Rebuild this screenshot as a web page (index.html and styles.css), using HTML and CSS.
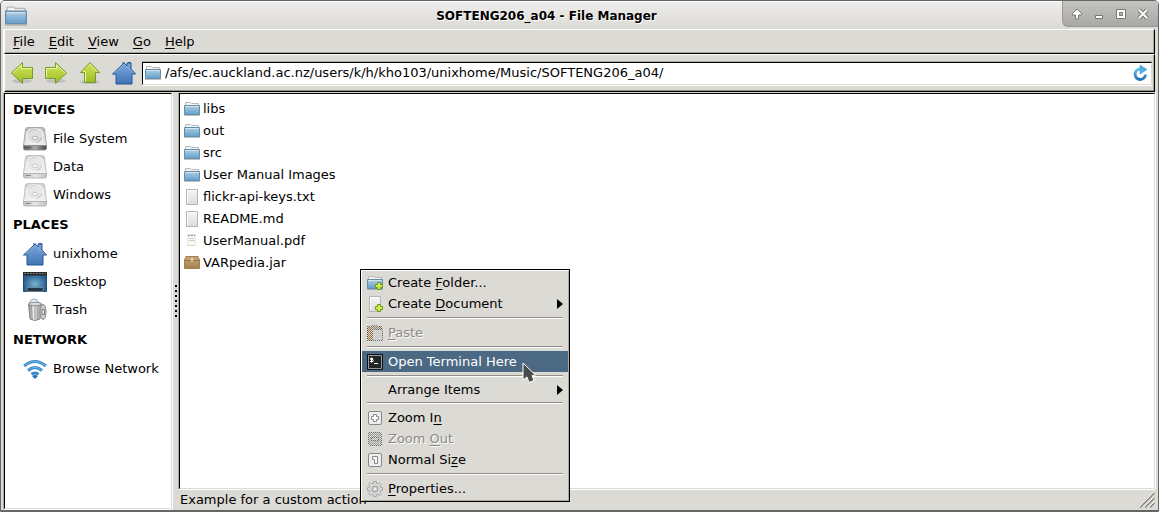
FILE: index.html
```html
<!DOCTYPE html>
<html lang="en">
<head>
<meta charset="utf-8">
<title>SOFTENG206_a04 - File Manager</title>
<link rel="stylesheet" href="styles.css">
</head>
<body>
<svg class="defs" aria-hidden="true">
  <defs>
    <linearGradient id="blue" x2="0" y2="1"><stop offset="0" stop-color="#b3cfe3"/><stop offset="1" stop-color="#5f9fce"/></linearGradient>
    <linearGradient id="green" x2="0" y2="1"><stop offset="0" stop-color="#d6e85c"/><stop offset="1" stop-color="#9cbb25"/></linearGradient>
    <linearGradient id="house" x2="0" y2="1"><stop offset="0" stop-color="#7fa8da"/><stop offset="1" stop-color="#3f74b7"/></linearGradient>
    <linearGradient id="paper" x2="0" y2="1"><stop offset="0" stop-color="#f6f6f6"/><stop offset="1" stop-color="#dcdcdc"/></linearGradient>
    <linearGradient id="metal" x2="0" y2="1"><stop offset="0" stop-color="#bcbcbc"/><stop offset="1" stop-color="#f1f1f1"/></linearGradient>
    <linearGradient id="edge"><stop offset="0" stop-color="#555"/><stop offset=".5" stop-color="#aaa"/><stop offset="1" stop-color="#444"/></linearGradient>
    <linearGradient id="edge-light"><stop offset="0" stop-color="#aaa"/><stop offset=".5" stop-color="#ddd"/><stop offset="1" stop-color="#aaa"/></linearGradient>
    <linearGradient id="box" x2="0" y2="1"><stop offset="0" stop-color="#c9a677"/><stop offset="1" stop-color="#a48150"/></linearGradient>
    <radialGradient id="screen" cy=".6"><stop offset="0" stop-color="#78b3cc"/><stop offset="1" stop-color="#2c5f93"/></radialGradient>
    <linearGradient id="wave" x2="0" y2="1"><stop offset="0" stop-color="#65c4ea"/><stop offset="1" stop-color="#2470bd"/></linearGradient>
    <linearGradient id="can"><stop offset="0" stop-color="#888"/><stop offset=".4" stop-color="#eee"/><stop offset="1" stop-color="#999"/></linearGradient>
    <pattern id="dither" width="2" height="2" patternUnits="userSpaceOnUse"><path d="M0 0h1v1H0zM1 1h1v1H1z" fill="#dcdad5"/></pattern>
  </defs>
  <symbol id="folder" viewBox="0 0 16 16">
    <path d="M1.500 5V1.500h5l1 1h7V5" fill="#f4f4f4" stroke="#b8b8b8"/>
    <path d="M.5 4.500h15v9H.5z" fill="url(#blue)" stroke="#648da9"/><path d="M1 5.500h14" stroke="#d3e3ef"/><path d="M0 14.500h16" stroke="#777" opacity=".45"/>
  </symbol>
  <symbol id="house-icon" viewBox="0 0 24 24">
    <path d="M12 2 15 5V2h4v6l4.500 5H20v10H4V13H.5Z" fill="url(#house)" stroke="#27569a"/><path d="m2.500 12 9.500-8.500 9.500 8.500" fill="none" stroke="#9dbce4" opacity=".6"/><path d="M10 2h3M16 1.500h3" stroke="#27569a"/>
  </symbol>
  <symbol id="disk" viewBox="0 0 24 24">
    <path d="M4.500.5h15q1.700 0 2 1.500l2 17H.5l2-17q.3-1.500 2-1.500Z" fill="url(#metal)" stroke="#a9a9a9"/>
    <path d="M.5 18.500h23v2.800q0 1.700-1.700 1.700H2.200Q.5 23 .5 21.300Z" fill="var(--disk-edge)" stroke="#888" stroke-width=".8"/>
    <path d="M5 3.500q7-3.500 14 0 3 6-1 11-6 4-12 0-4-5-1-11Z" fill="#dedede" stroke="#f8f8f8"/><path d="M5 6a9 5 0 0 1 9-3.500M19 12q-2 3-6 4M15 15l4-5" fill="none" stroke="#aaa" stroke-width=".7"/>
    <ellipse cx="12" cy="11" rx="3" ry="1.700" fill="#eee" stroke="#aaa" stroke-width=".8"/><path d="M3 20.500h5" stroke="#555"/><circle cx="4" cy="3" r=".6" fill="#777"/><circle cx="20" cy="3" r=".6" fill="#777"/>
  </symbol>
  <symbol id="page" viewBox="0 0 16 16"><path d="M2.500.5h11v15h-11z" fill="url(#paper)" stroke="#b4b4b4"/><path d="M3.500 14V1.500h9" fill="none" stroke="#fff"/></symbol>
  <symbol id="plus" viewBox="0 0 8 8"><path d="M2.500.5h3v2h2v3h-2v2h-3v-2h-2v-3h2z" fill="#d3ea4c" stroke="#6b9a1d"/></symbol>
</svg>
<div class="window">
  <header class="titlebar">
    <svg class="app-icon" viewBox="0 0 16 16"><use href="#folder"/></svg>
    <h1>SOFTENG206_a04 - File Manager</h1>
    <div class="controls">
      <button aria-label="Shade"><svg viewBox="0 0 12 12"><path d="M6 1 1.500 5.500V7h3v4h3V7h3V5.500Z" fill="#fff" stroke="#777"/></svg></button>
      <button aria-label="Minimize"><svg viewBox="0 0 12 12"><path d="M2.500 7.500h7v3h-7z" fill="#fff" stroke="#777"/></svg></button>
      <button aria-label="Maximize"><svg viewBox="0 0 12 12"><path d="M1.500 1.500h9v9h-9zM4.500 4.500v3h3v-3z" fill="#fff" fill-rule="evenodd" stroke="#777"/></svg></button>
      <button aria-label="Close"><svg viewBox="0 0 12 12"><path d="m2 2 8 8m0-8-8 8" stroke="#777" stroke-width="4"/><path d="m2 2 8 8m0-8-8 8" stroke="#fff" stroke-width="2"/></svg></button>
    </div>
  </header>
  <div class="client">
    <nav class="menubar">
      <button><u>F</u>ile</button><button><u>E</u>dit</button><button><u>V</u>iew</button><button><u>G</u>o</button><button><u>H</u>elp</button>
    </nav>
    <div class="toolbar">
      <button aria-label="Back"><svg viewBox="0 0 24 24"><ellipse cx="12" cy="20" rx="10" ry="2" opacity=".12"/><path d="M1.500 12 12.500 1.500v5h10v11h-10v5Z" fill="url(#green)" stroke="#6f9e2b"/><path d="m3 12 8.500-8v3.500h10" fill="none" stroke="#edf6a1"/></svg></button>
      <button aria-label="Forward"><svg viewBox="0 0 24 24"><ellipse cx="12" cy="20" rx="10" ry="2" opacity=".12"/><path d="M22.500 12 11.500 1.500v5h-10v11h10v5Z" fill="url(#green)" stroke="#6f9e2b"/><path d="m21 12-8.500-8v3.500h-10v9" fill="none" stroke="#edf6a1"/></svg></button>
      <button aria-label="Up"><svg viewBox="0 0 24 24"><ellipse cx="12" cy="21" rx="10" ry="2" opacity=".12"/><path d="M12 1.500 2.500 11.500h4v10h11v-10h4Z" fill="url(#green)" stroke="#6f9e2b"/><path d="M5 10.500h2.500v10M12 3l7 7.500" fill="none" stroke="#edf6a1"/></svg></button>
      <button aria-label="Home"><svg viewBox="0 0 24 24"><use href="#house-icon"/></svg></button>
      <div class="location">
        <svg class="icon" viewBox="0 0 16 16"><use href="#folder"/></svg>
        <input type="text" aria-label="Location" value="/afs/ec.auckland.ac.nz/users/k/h/kho103/unixhome/Music/SOFTENG206_a04/">
        <button class="reload" aria-label="Reload"><svg class="icon" viewBox="0 0 16 16"><path d="M13.500 9.500A5.200 5.200 0 1 1 8 4h1" fill="none" stroke="url(#wave)" stroke-width="3"/><path d="M8 0 15 4.500 8 9Z" fill="#50afdf" stroke="#3b95cb" stroke-width=".5"/></svg></button>
      </div>
    </div>
    <div class="body">
      <aside class="sidebar">
        <h2>DEVICES</h2>
        <ul>
          <li><svg class="dark" viewBox="0 0 24 24"><use href="#disk"/></svg><a href="#">File System</a></li>
          <li><svg class="light" viewBox="0 0 24 24"><use href="#disk"/></svg><a href="#">Data</a></li>
          <li><svg class="light" viewBox="0 0 24 24"><use href="#disk"/></svg><a href="#">Windows</a></li>
        </ul>
        <h2>PLACES</h2>
        <ul>
          <li><svg viewBox="0 0 24 24"><use href="#house-icon"/></svg><a href="#">unixhome</a></li>
          <li><svg viewBox="0 0 24 24"><path d="M.5 2.500h23v19H.5z" fill="url(#screen)" stroke="#244a6d"/><path d="M0 2h24v3.500H0z" fill="#292929"/><path d="M1 3.500h22" stroke="#777" stroke-dasharray="2 1"/><path d="M4 17.500h16v4H4z" fill="#263746" stroke="#88aabd" stroke-width=".6"/></svg><a href="#">Desktop</a></li>
          <li><svg viewBox="0 0 24 24"><path d="m6 6 2-4 3-1 3 1 3 4Z" fill="#e8f1f7" stroke="#90a9b9"/><path d="M5.500 6h13L17 21q-5 3-10 0Z" fill="url(#can)" stroke="#888"/><ellipse cx="12" cy="6" rx="6.500" ry="1.700" fill="#ddd" stroke="#888"/><path d="m8.500 8 .5 13m3-13v13m3-13-.5 13" stroke="#999"/><ellipse cx="20" cy="14" rx="3" ry="7.500" fill="#ccc" stroke="#888"/><path d="M19 11.500h2.500v5H19z" fill="#eee" stroke="#777"/></svg><a href="#">Trash</a></li>
        </ul>
        <h2>NETWORK</h2>
        <ul>
          <li><svg viewBox="0 0 24 24"><path d="M1.200 9q10.800-9 21.600 0M5 13.500q7-6 14 0M8.500 17.200q3.500-2.500 7 0" fill="none" stroke="#3486c8" stroke-width="3"/><path d="M1.500 8.700q10.500-8.700 21 0M5.300 13.200q6.700-5.700 13.400 0" fill="none" stroke="#6dbce9"/><path d="M9 19q3-2 6 0l-3 3Z" fill="#2871ba"/></svg><a href="#">Browse Network</a></li>
        </ul>
      </aside>
      <div class="splitter" role="separator"></div>
      <section class="main">
        <ul class="files">
          <li><svg class="icon" viewBox="0 0 16 16"><use href="#folder"/></svg>libs</li>
          <li><svg class="icon" viewBox="0 0 16 16"><use href="#folder"/></svg>out</li>
          <li><svg class="icon" viewBox="0 0 16 16"><use href="#folder"/></svg>src</li>
          <li><svg class="icon" viewBox="0 0 16 16"><use href="#folder"/></svg>User Manual Images</li>
          <li><svg class="icon" viewBox="0 0 16 16"><use href="#page"/></svg>flickr-api-keys.txt</li>
          <li><svg class="icon" viewBox="0 0 16 16"><use href="#page"/></svg>README.md</li>
          <li><svg class="icon" viewBox="0 0 16 16"><path d="M3.500 1.500h8v11h-8z" fill="#f8f8f4" stroke="#e6e6e6"/><path d="M4 2.500h7" stroke="#888" stroke-dasharray="2 1"/><path d="M5 5.500h5M5 7.500h6" stroke="#ccc"/><path d="M4 12.500h7" stroke="#e5d9b8"/></svg>UserManual.pdf</li>
          <li><svg class="icon" viewBox="0 0 16 16"><path d="M2 1.500h12L15.500 5v8.500H.5V5Z" fill="url(#box)" stroke="#a27f50"/><path d="M1 5.500h14" stroke="#9a7748"/><path d="M8 2v5M6 4.500h4" stroke="#ead8b7"/></svg>VARpedia.jar</li>
        </ul>
        <footer class="status"><span>Example for a custom action</span><svg class="grip" viewBox="0 0 16 16"><path d="M0 15 15 0M5 15 15 5M10 15l5-5" stroke="#fff"/><path d="M1 15.500 15.500 1M6 15.500 15.500 6M11 15.500l4.500-4.500" stroke="#88867f" stroke-width="1.500"/></svg></footer>
      </section>
    </div>
  </div>
</div>
<div class="context" role="menu">
  <button role="menuitem"><svg class="icon" viewBox="0 0 16 16"><use href="#folder"/><use href="#plus" x="8" y="7" width="8" height="8"/></svg><span>Create <u>F</u>older...</span></button>
  <button role="menuitem"><svg class="icon" viewBox="0 0 16 16"><use href="#page"/><use href="#plus" x="8" y="8" width="8" height="8"/></svg><span>Create <u>D</u>ocument</span><i class="arrow"></i></button>
  <hr>
  <button role="menuitem" disabled><svg class="icon" viewBox="0 0 16 16"><path d="M.5 1.500h14v14H.5z" fill="#9c6f36" stroke="#5a3d20"/><path d="M5.500 4.500h10v11h-10z" fill="#c4c4c4" stroke="#666"/><path d="M4 0h7v4H4z" fill="#777"/><path d="M0 0h16v16H0z" fill="url(#dither)"/></svg><span><u>P</u>aste</span></button>
  <hr>
  <button role="menuitem" class="selected"><svg class="icon" viewBox="0 0 16 16"><path d="M.5.5h15v15H.5z" fill="#242424" stroke="#111"/><path d="M1.500 1.500h13v13h-13z" fill="none" stroke="#999"/><path d="M6 4.500H3.500v1H6v2H3M4.500 3.500v5M7 9.500h4" fill="none" stroke="#fff"/></svg><span>Open Terminal Here</span></button>
  <hr>
  <button role="menuitem" class="plain"><span class="icon"></span><span>Arrange Items</span><i class="arrow"></i></button>
  <hr>
  <button role="menuitem"><svg class="icon" viewBox="0 0 16 16"><rect x="1.500" y="1.500" width="13" height="13" rx="1.500" fill="#eee" stroke="#888"/><path d="M6.500 4.500h3v2h2v3h-2v2h-3v-2h-2v-3h2z" fill="#fff" stroke="#888"/></svg><span>Zoom I<u>n</u></span></button>
  <button role="menuitem" disabled><svg class="icon" viewBox="0 0 16 16"><rect x="1.500" y="1.500" width="13" height="13" rx="1.500" fill="#999" stroke="#666"/><path d="M4.500 6.500h7v3h-7z" fill="#bbb" stroke="#555"/><path d="M0 0h16v16H0z" fill="url(#dither)"/></svg><span>Zoom <u>O</u>ut</span></button>
  <button role="menuitem"><svg class="icon" viewBox="0 0 16 16"><rect x="1.500" y="1.500" width="13" height="13" rx="1.500" fill="#eee" stroke="#888"/><path d="M5.500 4.500h5v7h-3v-4h-2z" fill="#fff" stroke="#888"/></svg><span>Normal Si<u>z</u>e</span></button>
  <hr>
  <button role="menuitem"><svg class="icon" viewBox="0 0 16 16"><path d="M6.500.5h3v2l1.500.5 1.500-1.500 2 2L13 5l.5 1.500h2v3h-2L13 11l1.500 1.500-2 2L11 13l-1.500.5v2h-3v-2L5 13l-1.500 1.500-2-2L3 11l-.5-1.500h-2v-3h2L3 5 1.500 3.500l2-2L5 3l1.500-.5Z" fill="#d8d8d8" stroke="#a8a8a8"/><circle cx="8" cy="8" r="3" fill="#ccc" stroke="#a0a0a0"/><circle cx="8" cy="8" r="1.200" fill="#f2f2f2"/></svg><span><u>P</u>roperties...</span></button>
  <svg class="pointer" viewBox="0 0 14 22"><path d="M1 1v17l4-3 2 5.500 5-2-2-5 3.500-.5Z" fill="#4b4b4b" stroke="#fff"/></svg>
</div>
</body>
</html>
```
FILE: styles.css
```css
* { box-sizing: border-box; }
body { margin: 0; min-height: 100vh; display: flex; background: #fff; color: #000; font: 13px/16px "DejaVu Sans", sans-serif; }
button, input { font: inherit; color: inherit; background: none; border: 0; padding: 0; margin: 0; }
ul { list-style: none; margin: 0; padding: 0; }
u { text-underline-offset: 2px; text-decoration-thickness: 1px; }
svg { display: block; flex: none; }
.defs { position: absolute; width: 0; height: 0; }
.icon { width: 16px; height: 16px; flex: none; }
.window { flex: 1; min-width: 0; display: flex; flex-direction: column; background: #dcdad5; border: 1px solid #666; border-bottom-width: 2px; border-radius: 5px 5px 1px 1px; padding: 0 3px 1px; overflow: hidden; }
.titlebar { height: 28px; margin: 0 -3px; display: flex; align-items: center; background: linear-gradient(#efedeb, #dcdad5); border-top: 1px solid #fff; }
.app-icon { width: 22px; height: 24px; margin-left: 4px; }
.titlebar h1 { flex: 1; margin: 0 0 0 4px; text-align: center; font: bold 12px/16px "DejaVu Sans", sans-serif; text-shadow: 1px 1px #fff; }
.controls { align-self: stretch; height: 26px; display: flex; align-items: center; gap: 10px; padding: 0 9px 0 8px; margin-top: -1px; background: linear-gradient(#c5c4c1, #aaa8a5); border-left: 1px solid #999; border-bottom: 1px solid #999; border-bottom-left-radius: 6px; }
.controls svg { width: 12px; height: 12px; }
.client { flex: 1; min-height: 0; display: flex; flex-direction: column; }
.menubar { height: 25px; display: flex; align-items: center; gap: 14px; padding: 0 8px; border: 1px solid #fff; border-right: 1px solid #000; border-bottom: 1px solid #000; box-shadow: inset 0 -1px #aaa79d, inset -1px 0 #aaa79d, -1px 0 #fff; }
.toolbar { height: 38px; display: flex; align-items: center; gap: 10px; padding: 0 2px 0 5px; border: 1px solid #fff; border-right: 1px solid #000; border-bottom: 1px solid #000; box-shadow: inset 0 -1px #918f88, inset -1px 0 #aaa79d, -1px 0 #fff; }
.toolbar > button svg { width: 24px; height: 24px; }
.location { flex: 1; min-width: 0; height: 23px; margin-left: -4px; display: flex; align-items: center; gap: 4px; padding: 0 3px 0 2px; background: #fff; border: 1px solid #000; border-color: #000 #dcdad5 #dcdad5 #000; box-shadow: 0 1px #fff, 0 -1px #aaa79d; }
.location input { flex: 1; min-width: 0; outline: 0; }
.body { flex: 1; min-height: 0; display: flex; }
.sidebar { width: 168px; background: #fff; border: 1px solid #000; border-color: #000 #dcdad5 #dcdad5 #000; box-shadow: 0 1px #fff, 1px 0 #fff, -1px 0 #aaa79d; padding: 0 8px; margin-top: 1px; }
.sidebar h2 { margin: 0; font: bold 13px/31px "DejaVu Sans", sans-serif; }
.sidebar li { height: 28px; display: flex; align-items: center; gap: 6px; padding-left: 10px; white-space: nowrap; }
.sidebar svg { width: 24px; height: 24px; }
.sidebar a { color: inherit; text-decoration: none; }
.dark { --disk-edge: url(#edge); }
.light { --disk-edge: url(#edge-light); opacity: .7; }
.splitter { width: 7px; background: repeating-linear-gradient(#000 0 2px, transparent 2px 5px) center / 2px 32px no-repeat; }
.main { flex: 1; min-width: 0; display: flex; flex-direction: column; }
.files { flex: 1; margin-top: 1px; padding: 4px; background: #fff; border: 1px solid #000; border-color: #000 #dcdad5 #dcdad5 #000; box-shadow: 0 1px #fff, 1px 0 #fff, -1px 0 #aaa79d; }
.files li { height: 22px; display: flex; align-items: center; gap: 3px; }
.status { height: 20px; display: flex; align-items: center; justify-content: space-between; padding: 2px 0 0 1px; }
.grip { width: 16px; height: 16px; }
.context { position: absolute; left: 360px; top: 269px; width: 210px; padding: 2px 1px; background: #dcdad5; border: 1px solid #000; box-shadow: inset 1px 1px #fff, inset -1px -1px #aaa79d; }
.context button { width: 100%; height: 21px; display: flex; align-items: center; gap: 5px; padding: 0 5px; white-space: nowrap; text-align: left; }
.context .plain { height: 19px; }
.context hr { height: 2px; margin: 3px 5px; border: 0; border-top: 1px solid #918f88; border-bottom: 1px solid #fff; }
.context button:disabled { color: #8c8a84; text-shadow: 1px 1px #fff; }
.context .selected { background: #4b6983; color: #fff; }
.arrow { margin-left: auto; border: 5px solid transparent; border-left: 6px solid #000; border-right: 0; }
.pointer { position: absolute; left: 161px; top: 92px; width: 14px; height: 22px; }
```
